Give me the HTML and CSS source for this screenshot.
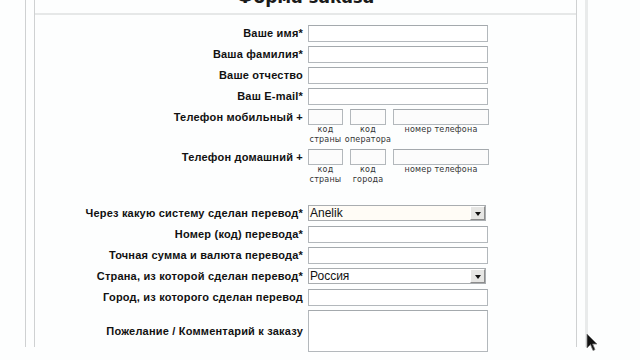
FILE: index.html
```
<!DOCTYPE html>
<html lang="ru">
<head>
    <meta charset="UTF-8">
    <meta name="viewport" content="width=device-width, initial-scale=1.0">
    <title>Форма заказа</title>
    <link rel="stylesheet" href="styles.css">
</head>
<body>
    <div class="page">
        <div class="box">
            <h2 class="title">Форма заказа</h2>

            <form class="order-form">
                <label class="label">Ваше имя*</label>
                <input class="field" type="text">

                <label class="label">Ваша фамилия*</label>
                <input class="field" type="text">

                <label class="label">Ваше отчество</label>
                <input class="field" type="text">

                <label class="label">Ваш E-mail*</label>
                <input class="field" type="text">

                <label class="label">Телефон мобильный +</label>
                <div class="phone">
                    <div class="phone-part w1">
                        <input class="phone-box" type="text">
                        <span class="hint">код<br>страны</span>
                    </div>
                    <div class="phone-part w2">
                        <input class="phone-box" type="text">
                        <span class="hint">код<br>оператора</span>
                    </div>
                    <div class="phone-part w3">
                        <input class="phone-box" type="text">
                        <span class="hint">номер телефона</span>
                    </div>
                </div>

                <label class="label">Телефон домашний +</label>
                <div class="phone">
                    <div class="phone-part w1">
                        <input class="phone-box" type="text">
                        <span class="hint">код<br>страны</span>
                    </div>
                    <div class="phone-part w2">
                        <input class="phone-box" type="text">
                        <span class="hint">код<br>города</span>
                    </div>
                    <div class="phone-part w3">
                        <input class="phone-box" type="text">
                        <span class="hint">номер телефона</span>
                    </div>
                </div>

                <div class="spacer"></div>

                <label class="label">Через какую систему сделан перевод*</label>
                <div class="select anelik">
                    <span class="select-value">Anelik</span>
                    <span class="select-btn"><i class="arrow"></i></span>
                </div>

                <label class="label">Номер (код) перевода*</label>
                <input class="field" type="text">

                <label class="label">Точная сумма и валюта перевода*</label>
                <input class="field" type="text">

                <label class="label">Страна, из которой сделан перевод*</label>
                <div class="select">
                    <span class="select-value">Россия</span>
                    <span class="select-btn"><i class="arrow"></i></span>
                </div>

                <label class="label">Город, из которого сделан перевод</label>
                <input class="field" type="text">

                <label class="label label-middle">Пожелание / Комментарий к заказу</label>
                <textarea class="comment"></textarea>
            </form>
        </div>
    </div>

    <svg class="cursor" viewBox="0 0 12 19" width="12" height="19">
        <path d="M1 1 L1 15 L4.5 11.5 L7 17.5 L9 16.6 L6.6 11 L11 11 Z" fill="#111" stroke="#777" stroke-width="0.8"/>
    </svg>
</body>
</html>
```

FILE: styles.css
```
* {
    margin: 0;
    padding: 0;
    box-sizing: border-box;
}

body {
    font-family: 'Liberation Sans', Arial, sans-serif;
    background: #fdfefe;
    color: #111;
    overflow: hidden;
    height: 360px;
}

.page {
    margin-left: 25px;
    width: 563px;
    height: 360px;
    border-left: 1px solid #cfd1d2;
    border-right: 3px solid #e9ebeb;
    padding: 0 8px;
}

.box {
    height: 100%;
    border-left: 1px solid #cfd1d2;
    border-right: 1px solid #cfd1d2;
}

/* заголовок прокручен за верхний край */
.title {
    margin-top: -13px;
    font-family: 'DejaVu Sans', sans-serif;
    font-size: 17px;
    line-height: 20px;
    font-weight: bold;
    text-align: center;
    color: #1a1a1a;
    padding-bottom: 6px;
    border-bottom: 2px solid #e6e8e8;
}

/* сетка формы */
.order-form {
    display: grid;
    grid-template-columns: 268px auto;
    column-gap: 5px;
    row-gap: 4px;
    padding-top: 10px;
    align-items: start;
}

.label {
    font-size: 11px;
    font-weight: bold;
    line-height: 17px;
    letter-spacing: 0.2px;
    text-align: right;
    white-space: nowrap;
}

.label-middle {
    align-self: center;
}

.field {
    display: block;
    width: 180px;
    height: 17px;
    border: 1px solid #b3b8bc;
    border-top-color: #a4a9ad;
    background: #fff;
}

.phone {
    display: flex;
    gap: 7px;
}

.phone-part {
    display: flex;
    flex-direction: column;
    align-items: center;
}

.phone-part.w1 { width: 35px; }
.phone-part.w2 { width: 36px; }
.phone-part.w3 { width: 96px; }

.phone-box {
    display: block;
    width: 100%;
    height: 16px;
    border: 1px solid #b3b8bc;
    border-top-color: #a4a9ad;
    background: #fcfcfc;
}

.hint {
    font-family: 'DejaVu Sans', sans-serif;
    font-size: 8px;
    line-height: 10px;
    letter-spacing: 0.2px;
    color: #333;
    text-align: center;
    white-space: nowrap;
}

.spacer {
    grid-column: 1 / 3;
    height: 12px;
}

.select {
    display: flex;
    align-items: center;
    width: 178px;
    height: 16px;
    border: 1px solid #a9adb0;
    background: #fff;
}

.select.anelik {
    background: #fffcf6;
}

.select-value {
    flex: 1;
    font-size: 12px;
    line-height: 14px;
    padding-left: 1px;
    color: #111;
}

.select-btn {
    width: 15px;
    height: 14px;
    background: #e6e6e4;
    border: 1px solid;
    border-color: #fff #8d8d8d #8d8d8d #fff;
    display: flex;
    align-items: center;
    justify-content: center;
}

.arrow {
    width: 0;
    height: 0;
    border-left: 3px solid transparent;
    border-right: 3px solid transparent;
    border-top: 4px solid #111;
    margin-top: 1px;
}

.comment {
    display: block;
    width: 180px;
    height: 42px;
    border: 1px solid #b3b8bc;
    border-top-color: #a4a9ad;
    background: #fff;
    resize: none;
}

.cursor {
    position: absolute;
    left: 586px;
    top: 333px;
}
```
